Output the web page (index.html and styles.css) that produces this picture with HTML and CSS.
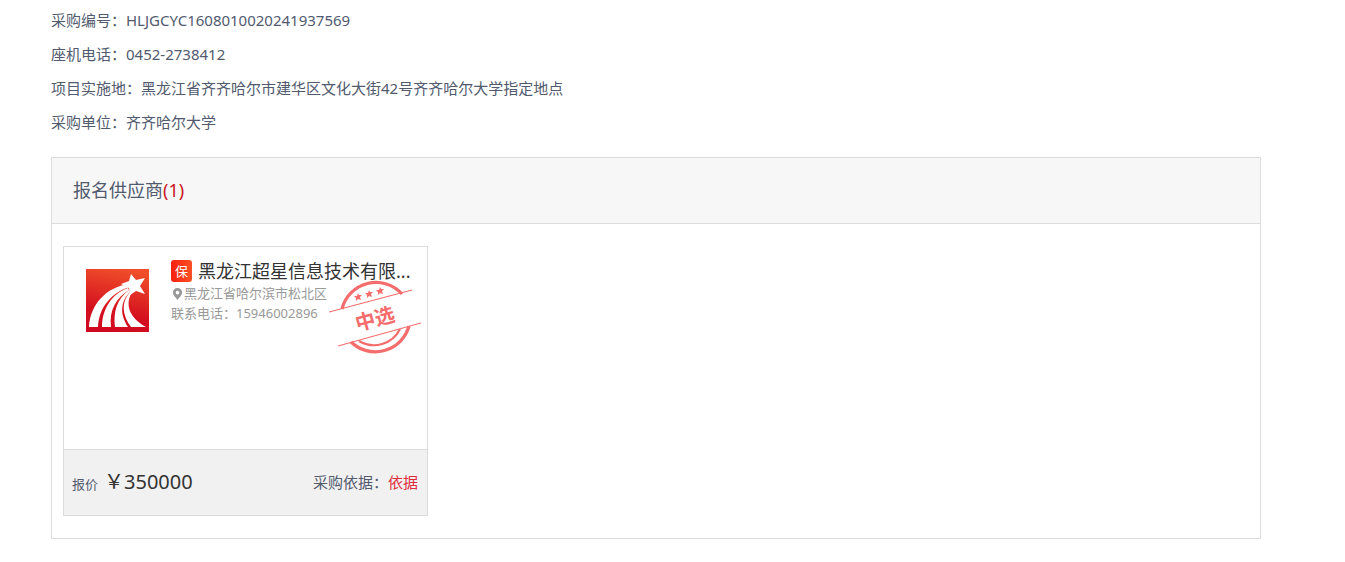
FILE: index.html
```html
<!DOCTYPE html>
<html lang="zh-CN">
<head>
<meta charset="UTF-8">
<meta name="viewport" content="width=device-width, initial-scale=1.0">
<title>报名供应商</title>
<link rel="stylesheet" href="styles.css">
</head>
<body>

<main class="container">
    <ul class="info">
        <li>采购编号：HLJGCYC1608010020241937569</li>
        <li>座机电话：0452-2738412</li>
        <li>项目实施地：黑龙江省齐齐哈尔市建华区文化大街42号齐齐哈尔大学指定地点</li>
        <li>采购单位：齐齐哈尔大学</li>
    </ul>

    <section class="panel">
        <h2 class="panel-title">报名供应商<span class="count">(1)</span></h2>
        <div class="panel-body">
            <article class="card">
                <div class="card-main">
                    <svg class="logo" viewBox="0 0 63 63" aria-hidden="true">
                        <defs>
                            <linearGradient id="logo-bg" x1="0.6" y1="0" x2="0.4" y2="1">
                                <stop offset="0" stop-color="#f04e2a"/>
                                <stop offset="0.7" stop-color="#d4101f"/>
                                <stop offset="1" stop-color="#cf0a20"/>
                            </linearGradient>
                        </defs>
                        <rect width="63" height="63" fill="url(#logo-bg)"/>
                        <g fill="#fff">
                            <path d="M45 5l5 6 9-2-5 8 5 8-9-3-6 4-1-7-8-4 8-3z"/>
                            <path d="M3 58C4 36 20 18 43 15l1 3C26 23 13 38 12 58z"/>
                            <path d="M16 58C16 41 25 25 42 19l1 2C30 29 23 41 25 58z"/>
                            <path d="M29 58C27 43 31 30 43 21l1 2C35 32 33 44 42 58z"/>
                            <path d="M45 58C36 46 35 33 44 23l3-1C38 34 43 49 60 58z"/>
                        </g>
                    </svg>
                    <div class="detail">
                        <h3 class="name"><span class="badge">保</span>黑龙江超星信息技术有限...</h3>
                        <p class="line">
                            <svg class="pin" viewBox="0 0 12 14" aria-hidden="true">
                                <path fill="#999" fill-rule="evenodd" d="M6 1a5 5 0 0 0-5 5c0 3 3 5 5 8 2-3 5-5 5-8a5 5 0 0 0-5-5zm0 3a2 2 0 1 1 0 4 2 2 0 0 1 0-4z"/>
                            </svg>黑龙江省哈尔滨市松北区
                        </p>
                        <p class="line">联系电话：15946002896</p>
                    </div>
                    <svg class="stamp" viewBox="0 0 92 76" role="img" aria-label="中选">
                        <g fill="none" stroke="#f56c6c">
                            <path stroke-width="3.2" d="M13 29A35 35 0 0 1 73 14"/>
                            <path stroke-width="3.2" d="M22 62A35 35 0 0 0 80 46"/>
                            <path stroke-width="2.2" d="M30 61A29 29 0 0 0 71 49"/>
                            <path stroke-width="1.2" d="M0 32L83 10M9 66L92 43"/>
                        </g>
                        <g fill="#f56c6c">
                            <path id="star" d="M29 13l1 2 3 0-2 2 1 3-3-1-2 2 0-3-2-2 3 0z"/>
                            <use href="#star" x="11" y="-3"/>
                            <use href="#star" x="22" y="-6"/>
                            <text class="stamp-text" x="46" y="46" text-anchor="middle" transform="rotate(-15 46 39)">中选</text>
                        </g>
                    </svg>
                </div>
                <footer class="card-foot">
                    <p class="offer">报价<strong class="price">￥350000</strong></p>
                    <p class="basis">采购依据：<a href="#">依据</a></p>
                </footer>
            </article>
        </div>
    </section>
</main>

</body>
</html>
```

FILE: styles.css
```css
body {
    margin: 0;
    font-family: "Noto Sans", "Noto Sans CJK SC", sans-serif;
    font-size: 15px;
    color: #515a6e;
    background-color: #fff;
}
h2, h3, p, ul {
    margin: 0;
    padding: 0;
    font-weight: normal;
}
.container {
    padding: 3px 84px 23px 51px;
}
.info {
    margin-bottom: 18px;
    list-style: none;
    line-height: 34px;
}
.panel {
    border: 1px solid #dcdcdc;
}
.panel-title {
    padding: 0 21px;
    font-size: 18px;
    line-height: 65px;
    background-color: #f7f7f7;
    border-bottom: 1px solid #dcdcdc;
}
.count {
    color: #c9151e;
}
.panel-body {
    padding: 22px 11px;
}
.card {
    box-sizing: border-box;
    max-width: 365px;
    border: 1px solid #dcdcdc;
}
.card-main {
    position: relative;
    display: flex;
    gap: 22px;
    min-height: 190px;
    padding: 12px 6px 0 22px;
}
.logo {
    flex: none;
    width: 63px;
    height: 63px;
    margin-top: 10px;
}
.name {
    display: flex;
    align-items: center;
    gap: 6px;
    font-size: 18px;
    line-height: 24px;
    white-space: nowrap;
    color: #333;
}
.badge {
    width: 21px;
    font-size: 13px;
    line-height: 22px;
    text-align: center;
    color: #fff;
    background: linear-gradient(90deg, #f5200f, #ff5126);
    border-radius: 3px;
}
.line {
    display: flex;
    align-items: center;
    font-size: 13px;
    line-height: 20px;
    color: #999;
}
.pin {
    width: 13px;
    height: 13px;
}
/* award stamp lies over the supplier details */
.stamp {
    position: absolute;
    top: 33px;
    right: 6px;
    width: 92px;
    height: 76px;
}
.stamp-text {
    font-size: 20px;
    font-weight: bold;
}
.card-foot {
    display: flex;
    justify-content: space-between;
    align-items: center;
    padding: 18px 9px 19px 8px;
    line-height: 28px;
    background-color: #f1f1f1;
    border-top: 1px solid #dcdcdc;
}
.offer {
    font-size: 13px;
    display: flex;
    align-items: baseline;
    height: 28px;
}
.price {
    margin-left: 6px;
    font-size: 20px;
    font-weight: normal;
    color: #333;
}
.basis a {
    color: #e02d3c;
    text-decoration: none;
}
```
